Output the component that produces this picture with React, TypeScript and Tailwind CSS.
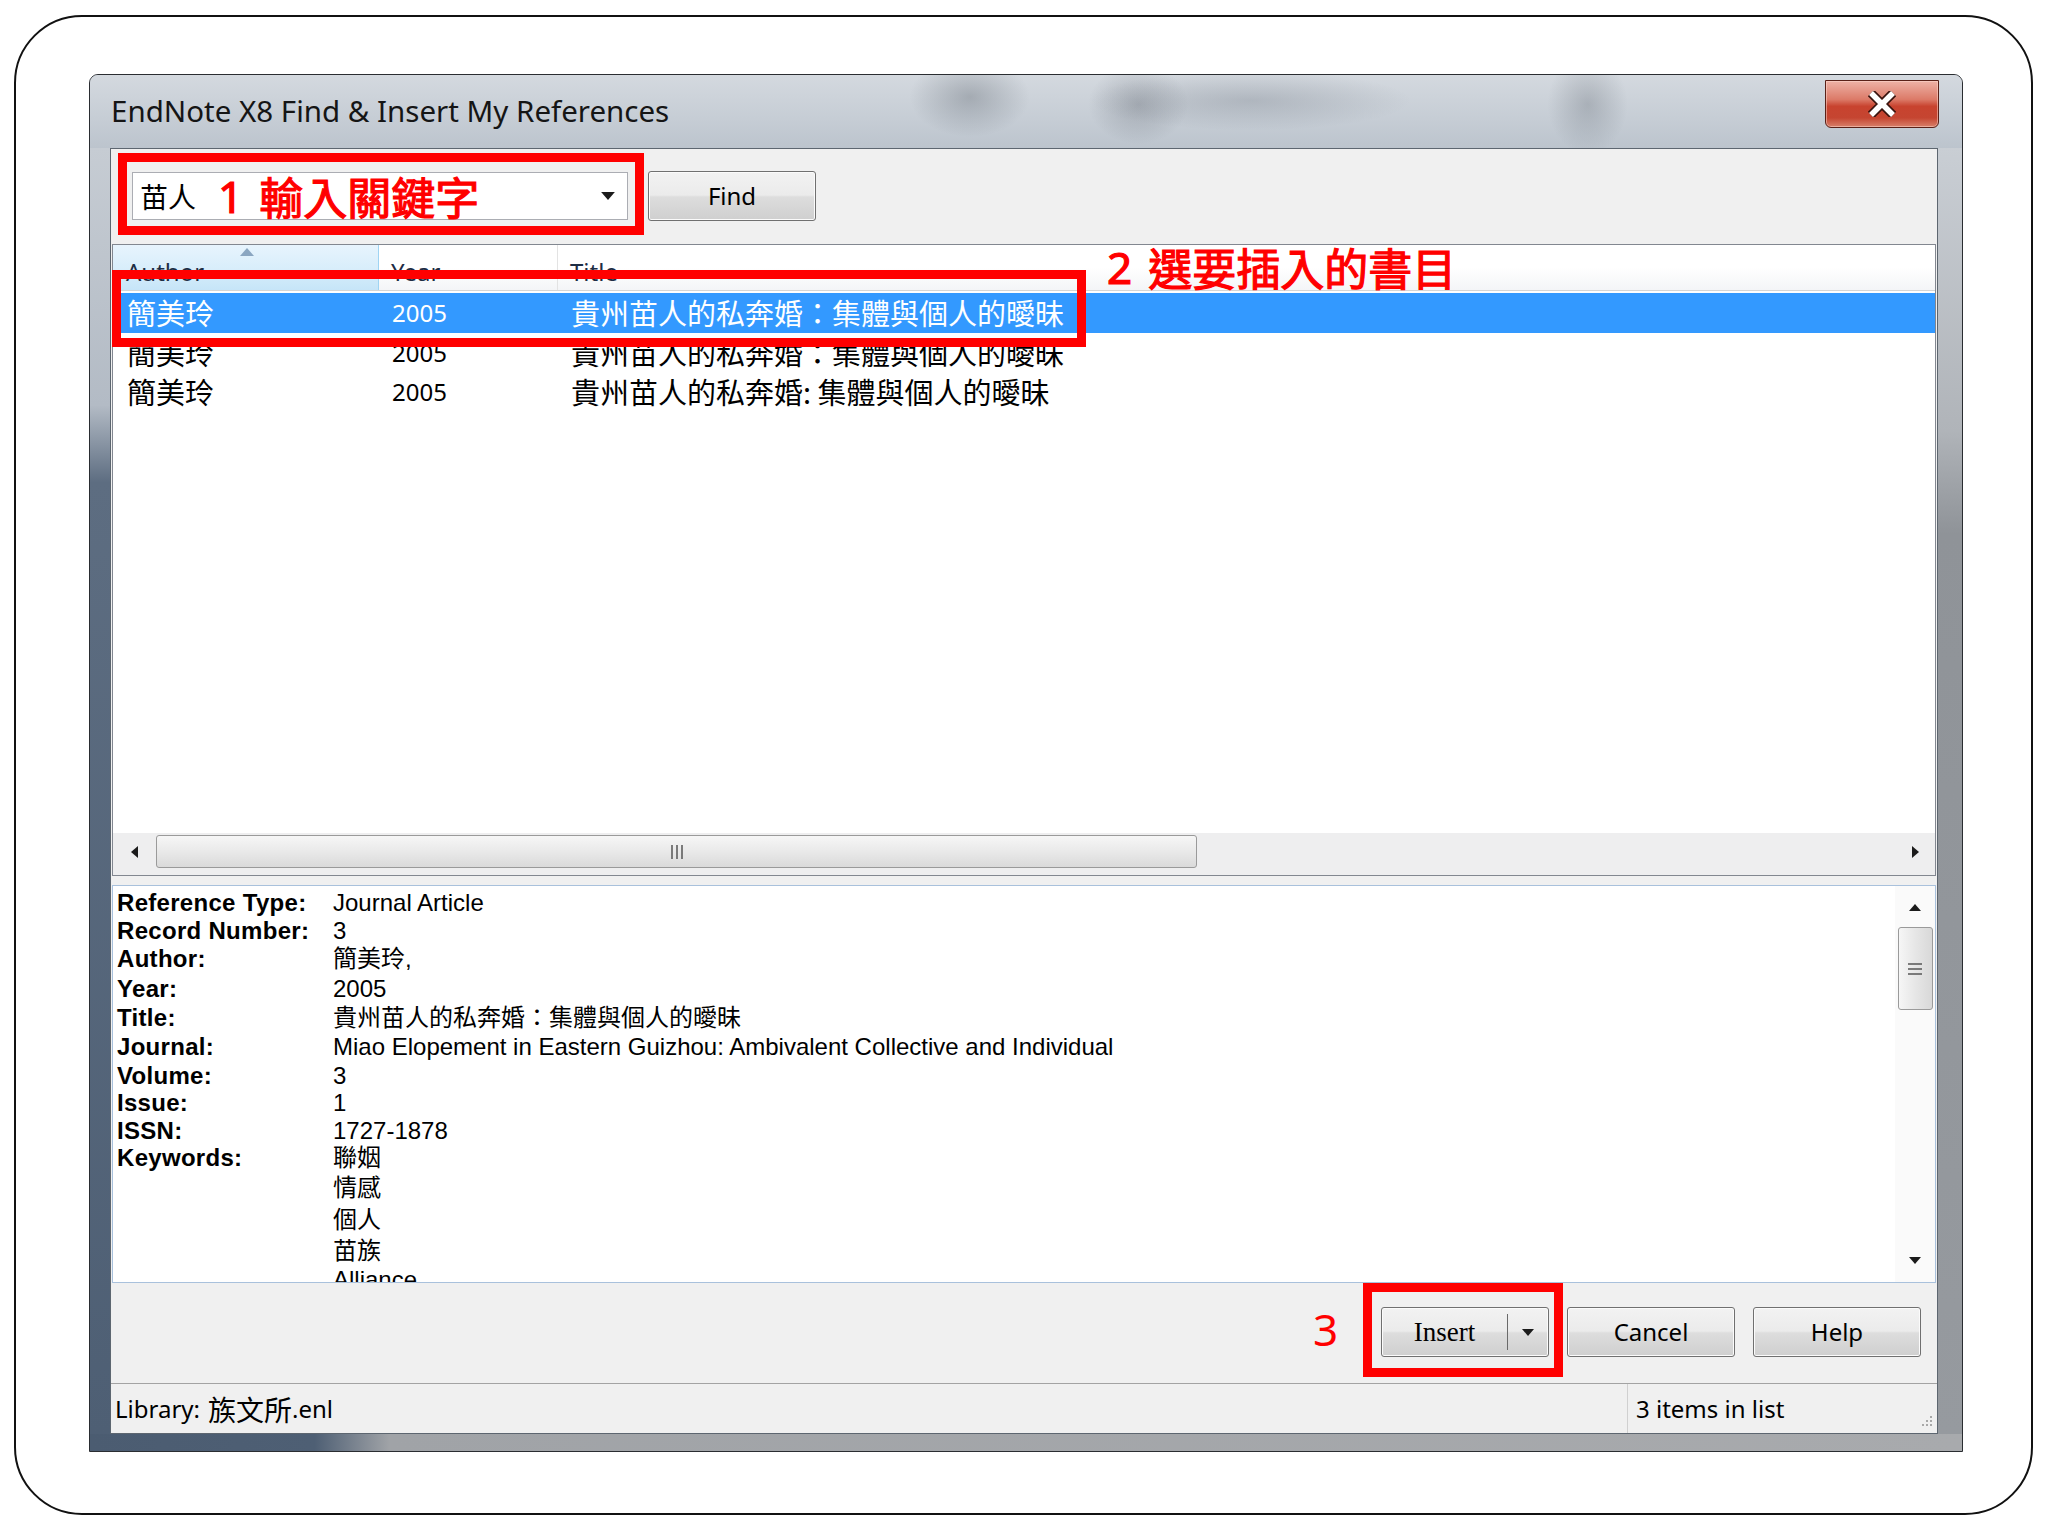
import React from "react";

const ui = "font-['Noto_Sans','Noto_Sans_CJK_TC',sans-serif]";
const cjk = "font-['Noto_Sans_CJK_TC','Noto_Sans_CJK_SC',sans-serif]";
const plain = "font-['Liberation_Sans','Noto_Sans_CJK_TC',sans-serif]";

const details: { label: string; value: string; h: string }[] = [
  { label: "Reference Type:", value: "Journal Article", h: "h-[28px]" },
  { label: "Record Number:", value: "3", h: "h-[27px]" },
  { label: "Author:", value: "簡美玲,", h: "h-[30px]" },
  { label: "Year:", value: "2005", h: "h-[29px]" },
  { label: "Title:", value: "貴州苗人的私奔婚：集體與個人的曖昧", h: "h-[29px]" },
  { label: "Journal:", value: "Miao Elopement in Eastern Guizhou: Ambivalent Collective and Individual", h: "h-[30px]" },
  { label: "Volume:", value: "3", h: "h-[27px]" },
  { label: "Issue:", value: "1", h: "h-[28px]" },
  { label: "ISSN:", value: "1727-1878", h: "h-[27px]" },
  { label: "Keywords:", value: "聯姻", h: "h-[28px]" },
  { label: "", value: "情感", h: "h-[32px]" },
  { label: "", value: "個人", h: "h-[31px]" },
  { label: "", value: "苗族", h: "h-[31px]" },
  { label: "", value: "Alliance", h: "h-[28px]" },
];

const refs = [
  { author: "簡美玲", year: "2005", title: "貴州苗人的私奔婚：集體與個人的曖昧", selected: true, h: "h-[40px]" },
  { author: "簡美玲", year: "2005", title: "貴州苗人的私奔婚：集體與個人的曖昧", selected: false, h: "h-[39px]" },
  { author: "簡美玲", year: "2005", title: "貴州苗人的私奔婚: 集體與個人的曖昧", selected: false, h: "h-[39px]" },
];

function Tri({ dir, className }: { dir: "up" | "down" | "left" | "right"; className?: string }) {
  const d =
    dir === "up" ? "M6 0L12 7H0z" : dir === "down" ? "M0 0H12L6 7z" : dir === "left" ? "M0 6L7 0V12z" : "M0 0L7 6L0 12z";
  const vb = dir === "up" || dir === "down" ? "0 0 12 7" : "0 0 7 12";
  const size = dir === "up" || dir === "down" ? "w-[12px] h-[7px]" : "w-[7px] h-[12px]";
  return (
    <svg className={`${size} ${className ?? ""}`} viewBox={vb}>
      <path d={d} fill="#1b1b1b" />
    </svg>
  );
}

function WinButton({ children, className }: { children: React.ReactNode; className?: string }) {
  return (
    <div
      className={`flex items-center justify-center h-[50px] w-[168px] rounded-[3px] border border-[#707070] bg-[linear-gradient(#f2f2f2_0%,#ebebeb_48%,#dddddd_52%,#cfcfcf_100%)] shadow-[inset_0_0_0_1px_#fbfbfb] text-[24px] text-black ${ui} ${className ?? ""}`}
    >
      {children}
    </div>
  );
}

function TitleBar() {
  return (
    <div className="h-[73px] flex items-start justify-between bg-[radial-gradient(ellipse_60px_40px_at_47%_30%,rgba(70,78,88,0.3),transparent),radial-gradient(ellipse_160px_30px_at_62%_35%,rgba(90,98,110,0.25),transparent),radial-gradient(ellipse_50px_40px_at_56%_40%,rgba(60,66,76,0.25),transparent),radial-gradient(ellipse_40px_50px_at_80%_40%,rgba(70,78,88,0.25),transparent),linear-gradient(#d4d9df,#c6cdd5_60%,#bcc4cd)]">
      <div className={`pl-[21px] pt-[19px] text-[29.5px] leading-[34px] text-[#151515] ${ui}`}>
        EndNote X8 Find &amp; Insert My References
      </div>
      <div className="mt-[5px] mr-[23px] w-[114px] h-[48px] rounded-b-[6px] border border-[#5a2118] bg-[linear-gradient(#eeb2a6_0%,#dc7a68_40%,#c8432f_55%,#c54531_80%,#d8806a_100%)] shadow-[inset_0_0_0_1px_rgba(255,220,210,0.5)] flex items-center justify-center">
        <svg className="w-[30px] h-[26px]" viewBox="0 0 30 26">
          <path d="M4 2L15 13L26 2M4 24L15 13L26 24" stroke="#3b1510" strokeWidth="9" fill="none" />
          <path d="M4 2L15 13L26 2M4 24L15 13L26 24" stroke="#ffffff" strokeWidth="5.5" fill="none" />
        </svg>
      </div>
    </div>
  );
}

function Toolbar() {
  return (
    <div className="h-[95px] flex items-start gap-[20px] pl-[21px] pt-[23px]">
      <div className="w-[496px] h-[48px] bg-white border border-[#abadb3] flex items-center pl-[7px] pr-[12px]">
        <span className={`text-[28px] text-black ${cjk}`}>苗人</span>
        <span className={`ml-[22px] text-[44px] leading-[48px] text-[#ff0000] [-webkit-text-stroke:1.2px_#ff0000] ${ui}`}>1</span>
        <span className={`ml-[16px] text-[44px] leading-[48px] text-[#ff0000] [-webkit-text-stroke:1.2px_#ff0000] ${cjk}`}>輸入關鍵字</span>
        <div className="flex-1" />
        <Tri dir="down" className="w-[14px] h-[8px]" />
      </div>
      <WinButton className="w-[167px] -mt-[1px]">Find</WinButton>
    </div>
  );
}

function ListView() {
  return (
    <div className="mx-[1px] h-[632px] bg-white border border-[#828790] flex flex-col">
      <div className={`h-[46px] flex text-[24px] text-[#1e2d44] bg-[linear-gradient(#ffffff,#ffffff_50%,#f4f5f7)] border-b border-[#d5d5d5] ${ui}`}>
        <div className="relative w-[266px] pl-[13px] pt-[9px] bg-[linear-gradient(#e7f4fd,#d9eefb_50%,#c6e5f8)] border-r border-[#9fd4f3]">
          <svg className="absolute left-[127px] top-[3px] w-[14px] h-[8px]" viewBox="0 0 14 8">
            <path d="M7 0L14 8H0z" fill="#8aa6c1" />
          </svg>
          Author
        </div>
        <div className="w-[179px] pl-[12px] pt-[9px] border-r border-[#e3e3e3]">Year</div>
        <div className="flex-1 pl-[12px] pt-[9px]">Title</div>
      </div>
      <div className="mt-[2px] flex flex-col">
        {refs.map((r, i) => (
          <div
            key={i}
            className={`${r.h} flex items-center ${r.selected ? "bg-[#3399ff] text-white" : "text-black"}`}
          >
            <span className={`w-[266px] pl-[14px] text-[29px] ${cjk}`}>{r.author}</span>
            <span className={`w-[179px] pl-[13px] text-[24px] ${ui}`}>{r.year}</span>
            <span className={`pl-[13px] text-[29px] ${cjk}`}>{r.title}</span>
          </div>
        ))}
      </div>
      <div className="flex-1" />
      <div className="h-[42px] bg-[#eeeeef] flex items-start pt-[2px]">
        <div className="w-[43px] h-[33px] flex items-center justify-center">
          <Tri dir="left" />
        </div>
        <div className="w-[1041px] h-[33px] rounded-[3px] border border-[#9a9a9a] bg-[linear-gradient(#f6f6f6,#e9e9e9_50%,#dadada)] flex items-center justify-center">
          <svg className="w-[12px] h-[14px]" viewBox="0 0 12 14">
            <path d="M1 0V14M6 0V14M11 0V14" stroke="#555" strokeWidth="1.5" />
          </svg>
        </div>
        <div className="flex-1" />
        <div className="w-[40px] h-[33px] flex items-center justify-center">
          <Tri dir="right" />
        </div>
      </div>
    </div>
  );
}

function DetailPane() {
  return (
    <div className="mx-[1px] h-[398px] bg-white border border-[#a9c1dc] flex overflow-hidden">
      <div className={`flex-1 pl-[4px] pt-[3px] text-[24px] text-black ${plain}`}>
        {details.map((d, i) => (
          <div key={i} className={`${d.h} flex items-center`}>
            <span className="w-[216px] font-bold tracking-[0.3px]">{d.label}</span>
            <span className="whitespace-nowrap">{d.value}</span>
          </div>
        ))}
      </div>
      <div className="w-[40px] bg-[#fafafa] flex flex-col items-center">
        <Tri dir="up" className="mt-[18px]" />
        <div className="mt-[16px] w-[35px] h-[83px] rounded-[3px] border border-[#9a9a9a] bg-[linear-gradient(to_right,#f6f6f6,#e6e6e6_50%,#d8d8d8)] flex items-center justify-center">
          <svg className="w-[14px] h-[12px]" viewBox="0 0 14 12">
            <path d="M0 1H14M0 6H14M0 11H14" stroke="#555" strokeWidth="1.5" />
          </svg>
        </div>
        <div className="flex-1" />
        <Tri dir="down" className="mb-[18px]" />
      </div>
    </div>
  );
}

function ButtonRow() {
  return (
    <div className="h-[100px] flex items-start justify-end pt-[24px] pr-[16px] gap-[18px]">
      <WinButton className="justify-start">
        <span className="w-[125px] flex justify-center font-['Liberation_Serif',serif] text-[27px]">Insert</span>
        <span className="w-[1px] h-[36px] bg-[#6a6a6a]" />
        <span className="flex-1 flex justify-center">
          <Tri dir="down" className="w-[10px] h-[6px]" />
        </span>
      </WinButton>
      <WinButton>Cancel</WinButton>
      <WinButton>Help</WinButton>
    </div>
  );
}

function StatusBar() {
  return (
    <div className={`h-[50px] border-t border-[#a3a3a3] flex items-center text-[24px] text-black ${ui}`}>
      <div className="w-[1516px] pl-[4px] flex items-center">
        <span>Library: </span>
        <span className={`ml-[8px] text-[28px] ${cjk}`}>族文所</span>
        <span>.enl</span>
      </div>
      <div className="h-full border-l border-[#d0d0d0] pl-[8px] flex items-center flex-1">3 items in list</div>
      <svg className="self-end mb-[4px] mr-[4px] w-[14px] h-[14px]" viewBox="0 0 14 14">
        <g fill="#a8a8a8">
          <rect x="11" y="1" width="2" height="2" />
          <rect x="7" y="5" width="2" height="2" />
          <rect x="11" y="5" width="2" height="2" />
          <rect x="3" y="9" width="2" height="2" />
          <rect x="7" y="9" width="2" height="2" />
          <rect x="11" y="9" width="2" height="2" />
        </g>
      </svg>
    </div>
  );
}

function Client() {
  return (
    <div className="relative w-[1828px] bg-[#f0f0f0] border border-[#5d6670] flex flex-col">
      <Toolbar />
      <ListView />
      <div className="h-[9px]" />
      <DetailPane />
      <ButtonRow />
      <StatusBar />

      {/* annotations */}
      <div className="absolute left-[7px] top-[4px] w-[526px] h-[82px] border-[9px] border-[#ff0000]" />
      <div className="absolute left-[1px] top-[121px] w-[974px] h-[77px] border-[9px] border-[#ff0000]" />
      <div className={`absolute left-[996px] top-[92px] flex items-center text-[44px] leading-[52px] text-[#ff0000] [-webkit-text-stroke:1.2px_#ff0000] ${cjk}`}>
        <span className={ui}>2</span>
        <span className="ml-[16px]">選要插入的書目</span>
      </div>
      <div className={`absolute left-[1202px] top-[1150px] text-[44px] leading-[60px] text-[#ff0000] ${ui}`}>3</div>
      <div className="absolute left-[1252px] top-[1134px] w-[200px] h-[94px] border-[9px] border-[#ff0000]" />
    </div>
  );
}

export default function App() {
  return (
    <div className="w-[2048px] h-[1536px] bg-white pl-[14px] pt-[15px]">
      <div className="w-[2019px] h-[1500px] rounded-[68px] border-2 border-[#111] pl-[73px] pt-[57px]">
        <div className="w-[1874px] h-[1378px] rounded-t-[9px] border border-[#2a2d31] flex flex-col overflow-hidden bg-[#b4bbc3]">
          <TitleBar />
          <div className="flex h-[1286px]">
            <div className="w-[20px] bg-[linear-gradient(#c6ccd3,#b3bbc5_20%,#5d6d81_26%,#4e5f74)]" />
            <Client />
            <div className="w-[24px] bg-[linear-gradient(#c9ced4,#b0b4b9_22%,#8f9398_30%,#969a9f)]" />
          </div>
          <div className="flex-1 bg-[linear-gradient(to_right,#4b5c71,#4e5f74_12%,#a0a3a7_16%,#a8aaad)]" />
        </div>
      </div>
    </div>
  );
}
